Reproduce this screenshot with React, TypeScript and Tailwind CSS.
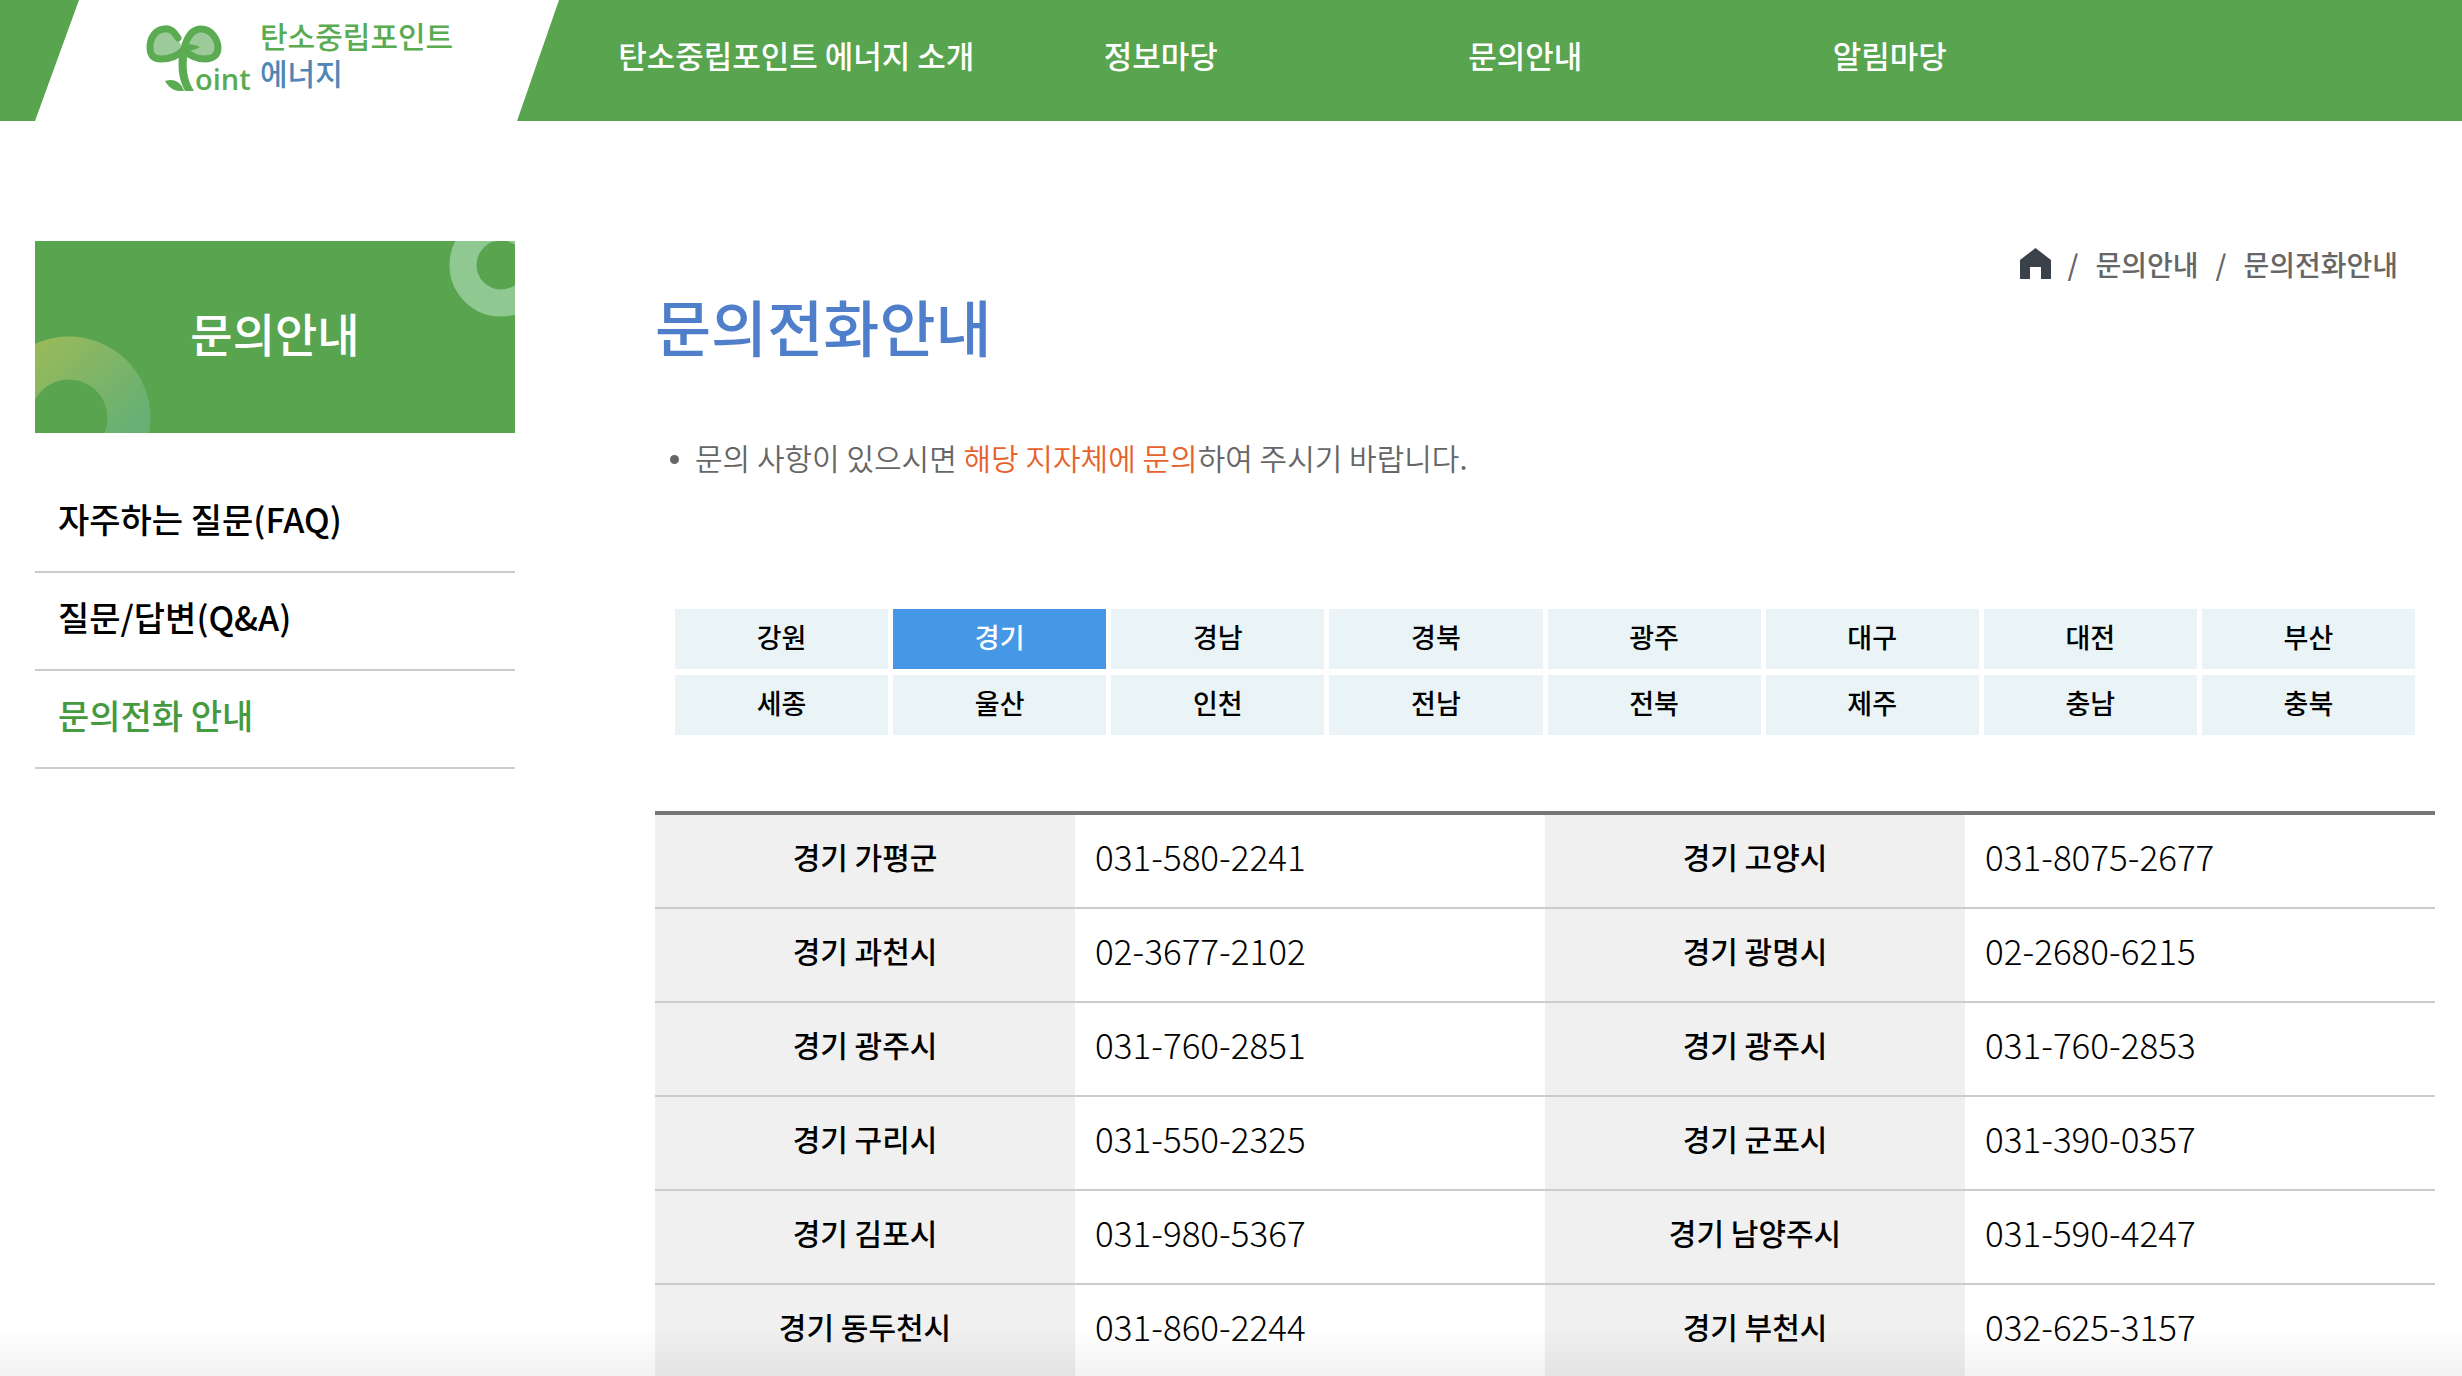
const menus = ['탄소중립포인트 에너지 소개', '정보마당', '문의안내', '알림마당'];

const sideLinks = [
  { label: '자주하는 질문(FAQ)', active: false },
  { label: '질문/답변(Q&A)', active: false },
  { label: '문의전화 안내', active: true },
];

const regions = [
  '강원', '경기', '경남', '경북', '광주', '대구', '대전', '부산',
  '세종', '울산', '인천', '전남', '전북', '제주', '충남', '충북',
];

const contacts = [
  ['경기 가평군', '031-580-2241', '경기 고양시', '031-8075-2677'],
  ['경기 과천시', '02-3677-2102', '경기 광명시', '02-2680-6215'],
  ['경기 광주시', '031-760-2851', '경기 광주시', '031-760-2853'],
  ['경기 구리시', '031-550-2325', '경기 군포시', '031-390-0357'],
  ['경기 김포시', '031-980-5367', '경기 남양주시', '031-590-4247'],
  ['경기 동두천시', '031-860-2244', '경기 부천시', '032-625-3157'],
];

function SproutIcon() {
  return (
    <svg width="76" height="66" viewBox="0 0 76 66" fill="none" aria-hidden="true">
      <path
        d="M32 14C28 6 23 3 18 4C9 5 4 13 4 22C4 30 7 34 15 34C25 34 33 30 38 24C41 11 47 4 55 4C65 4 72 14 72 23C72 30 67 34 59 34C50 34 44 30 38 26"
        fill="#9dca9a"
      />
      <path
        d="M32 13C28 6 23 3 18 4C9 5 4 13 4 22C4 30 7 34 15 34C25 34 33 30 38 24C41 11 47 4 55 4C65 4 72 14 72 23C72 30 67 34 59 34C50 34 44 30 38 26"
        stroke="#5aab52"
        strokeWidth="7"
        strokeLinecap="round"
        strokeLinejoin="round"
      />
      <path d="M38 19C43 19 48 19 54 22C49 25 44 26 38 27Z" fill="#5aab52" />
      <path d="M33 29L42 27C39 42 41 55 48 66H39C32 53 32 41 33 29Z" fill="#5aab52" />
      <path d="M19 56C28 53 35 57 38 66C29 67 23 63 19 56Z" fill="#5aab52" />
    </svg>
  );
}

function Header() {
  return (
    <header className="relative flex h-[121px] items-center bg-[#58a44f]">
      <svg className="absolute top-0 left-0" width="560" height="121" aria-hidden="true">
        <path d="M79 0H559L517 121H35Z" fill="#fff" />
      </svg>
      <a href="#" className="relative flex w-[614px] shrink-0 items-end pb-3.5 pl-[146px]">
        <SproutIcon />
        <span className="-ml-[27px] w-[65px] font-[Open_Sans] text-[29px] leading-6 font-semibold text-[#5aab52]">
          oint
        </span>
        <span className="flex flex-col text-[30px] leading-[37px] font-medium">
          <span className="text-[#5aab52]">탄소중립포인트</span>
          <span className="text-[#4f86b4]">에너지</span>
        </span>
      </a>
      <nav className="grid flex-1 grid-cols-4 pr-[390px] pb-2.5">
        {menus.map((menu) => (
          <a key={menu} href="#" className="text-center text-[31px] font-medium whitespace-nowrap text-white">
            {menu}
          </a>
        ))}
      </nav>
    </header>
  );
}

function Sidebar() {
  return (
    <aside className="w-[480px] shrink-0">
      <div className="relative flex h-[192px] items-center justify-center overflow-hidden bg-[#58a44f] pb-2.5">
        <svg className="absolute inset-0" width="480" height="192" fill="none" aria-hidden="true">
          <defs>
            <linearGradient id="ring" x1="0" y1="0" x2="1" y2="1">
              <stop offset="0.1" stopColor="#96b95b" />
              <stop offset="0.8" stopColor="#66b074" />
            </linearGradient>
          </defs>
          <circle cx="466" cy="24" r="38" stroke="#90c892" strokeWidth="27" />
          <circle cx="34" cy="177" r="60" stroke="url(#ring)" strokeWidth="43" />
        </svg>
        <h2 className="relative text-[46px] font-medium text-white">문의안내</h2>
      </div>
      <ul className="mt-[42px]">
        {sideLinks.map((link) => (
          <li key={link.label} className="border-b-2 border-[#ccc]">
            <a
              href="#"
              className={`block pt-[18px] pb-[26px] pl-[23px] text-[34px] leading-[52px] font-medium ${
                link.active ? 'text-[#459a3f]' : 'text-black'
              }`}
            >
              {link.label}
            </a>
          </li>
        ))}
      </ul>
    </aside>
  );
}

function Breadcrumb() {
  return (
    <nav className="flex h-[45px] items-center justify-end gap-[17px] pr-[37px] text-[28px] font-medium text-[#666]">
      <a href="#" aria-label="홈">
        <svg width="31" height="31" viewBox="0 0 31 31" aria-hidden="true">
          <path d="M15.500 0L31 12V31H21V19H10V31H0V12Z" fill="#3b414b" />
        </svg>
      </a>
      <span>/</span>
      <a href="#">문의안내</a>
      <span>/</span>
      <a href="#">문의전화안내</a>
    </nav>
  );
}

export default function App() {
  return (
    <div className="h-screen overflow-hidden bg-white font-['Noto_Sans_CJK_KR',sans-serif] text-black">
      <Header />

      <div className="flex gap-[140px] pt-[120px] pr-[27px] pl-[35px]">
        <Sidebar />

        <main className="flex-1">
          <Breadcrumb />
          <h1 className="text-[61px] leading-[80px] font-medium text-[#4f7ecb]">문의전화안내</h1>

          <ul className="mt-[67px] pl-[15px] text-[30px] leading-[48px] font-[350] text-[#666]">
            <li className="flex items-center gap-4">
              <span className="size-[9px] rounded-full bg-[#666]" />
              <span className="pb-1">
                문의 사항이 있으시면 <span className="text-[#e8622c]">해당 지자체에 문의</span>하여 주시기 바랍니다.
              </span>
            </li>
          </ul>

          {/* Region tabs */}
          <div className="mx-5 mt-[124px] grid grid-cols-8 gap-x-[5px] gap-y-[6px]">
            {regions.map((region) => (
              <button
                key={region}
                type="button"
                className={`h-[60px] pb-1 text-[27px] font-medium ${
                  region === '경기' ? 'bg-[#4698e7] text-white' : 'bg-[#eaf4f7] text-black'
                }`}
              >
                {region}
              </button>
            ))}
          </div>

          {/* Contact numbers */}
          <table className="mt-[76px] w-full table-fixed border-separate border-spacing-0 border-t-4 border-[#777]">
            <colgroup>
              <col className="w-[23.6%]" />
              <col className="w-[26.4%]" />
              <col className="w-[23.6%]" />
              <col className="w-[26.4%]" />
            </colgroup>
            <tbody>
              {contacts.map(([nameA, telA, nameB, telB]) => (
                <tr key={telA} className="h-[94px]">
                  <th scope="row" className="border-b-2 border-[#ccc] bg-[#f0f0f0] pb-2.5 text-[30px] font-medium">
                    {nameA}
                  </th>
                  <td className="border-b-2 border-[#ccc] pb-2.5 pl-5 text-[35px] font-light">{telA}</td>
                  <th scope="row" className="border-b-2 border-[#ccc] bg-[#f0f0f0] pb-2.5 text-[30px] font-medium">
                    {nameB}
                  </th>
                  <td className="border-b-2 border-[#ccc] pb-2.5 pl-5 text-[35px] font-light">{telB}</td>
                </tr>
              ))}
            </tbody>
          </table>
        </main>
      </div>

      <div className="pointer-events-none fixed inset-x-0 bottom-0 h-12 bg-linear-to-b from-transparent to-black/5" />
    </div>
  );
}
